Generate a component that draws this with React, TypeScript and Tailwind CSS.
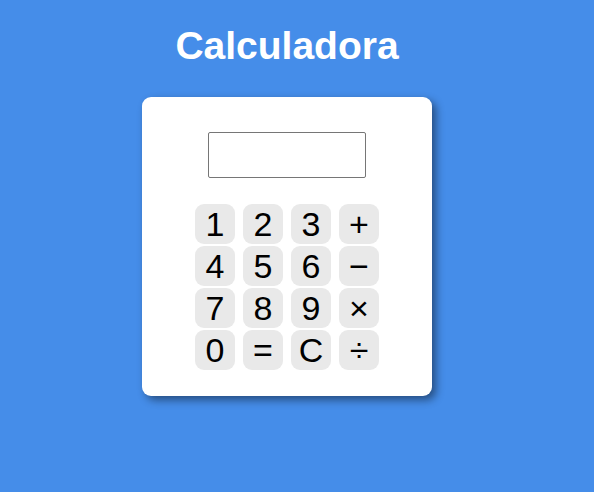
import React from "react";

const keys = ["1", "2", "3", "+", "4", "5", "6", "\u2212", "7", "8", "9", "\u00d7", "0", "=", "C", "\u00f7"];

export default function App() {
  return (
    <div className="w-[594px] h-[492px] bg-[#458de9] overflow-hidden" style={{ fontFamily: '"Liberation Sans", Arial, sans-serif' }}>
      <div className="w-[574px] flex flex-col items-center pt-[25px]">
        <h1 className="text-[39px] leading-[42px] font-bold text-white">Calculadora</h1>
        <div className="mt-[30px] w-[290px] h-[299px] bg-white rounded-[9px] shadow-[4px_4px_8px_rgba(0,0,0,0.45)] flex flex-col items-center pt-[35px]">
          <input
            type="text"
            readOnly
            className="w-[158px] h-[46px] border border-[#767676] rounded-[2px] bg-white"
          />
          <div className="mt-[26px] grid grid-cols-4 gap-x-[8px] gap-y-[2px]">
            {keys.map((k) => (
              <button
                key={k}
                className="w-[40px] h-[40px] rounded-[9px] bg-[#e9e9e9] text-black text-[34px] leading-none flex items-center justify-center"
              >
                {k}
              </button>
            ))}
          </div>
        </div>
      </div>
    </div>
  );
}
